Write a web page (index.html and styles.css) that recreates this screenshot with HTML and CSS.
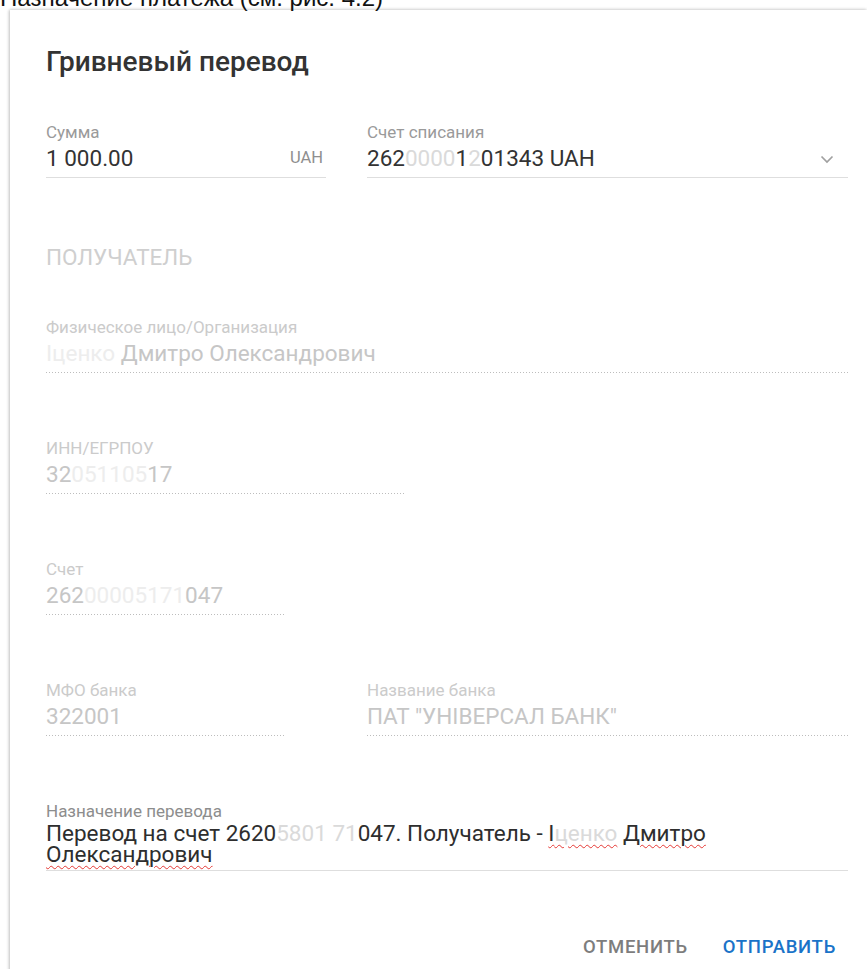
FILE: index.html
```html
<!DOCTYPE html>
<html lang="ru">
<head>
<meta charset="utf-8">
<title>Гривневый перевод</title>
<link rel="stylesheet" href="styles.css">
</head>
<body>
  <p class="doc-line">Назначение платежа (см. рис. 4.2)</p>

  <section class="dialog">
    <h1 class="dialog-title">Гривневый перевод</h1>

    <div class="row row-top">
      <div class="field">
        <div class="field-label">Сумма</div>
        <div class="field-value with-suffix">
          <span>1 000.00</span>
          <span class="suffix">UAH</span>
        </div>
      </div>
      <div class="field">
        <div class="field-label">Счет списания</div>
        <div class="field-value with-suffix">
          <span>262<span class="masked">0000</span>1<span class="masked">2</span>01343 UAH</span>
          <svg class="chevron" width="14" height="9" viewBox="0 0 14 9" aria-hidden="true">
            <path d="M1.5 1.5 L7 7 L12.5 1.5" fill="none" stroke="#a0a0a0" stroke-width="1.7"/>
          </svg>
        </div>
      </div>
    </div>

    <h2 class="section-title">ПОЛУЧАТЕЛЬ</h2>

    <div class="field disabled">
      <div class="field-label">Физическое лицо/Организация</div>
      <div class="field-value"><span class="masked-light">Іценко</span> Дмитро Олександрович</div>
    </div>

    <div class="field disabled w-inn">
      <div class="field-label">ИНН/ЕГРПОУ</div>
      <div class="field-value">32<span class="masked-light">051105</span>17</div>
    </div>

    <div class="field disabled w-short">
      <div class="field-label">Счет</div>
      <div class="field-value">262<span class="masked-light">00005171</span>047</div>
    </div>

    <div class="row row-bank">
      <div class="field disabled">
        <div class="field-label">МФО банка</div>
        <div class="field-value">322001</div>
      </div>
      <div class="field disabled">
        <div class="field-label">Название банка</div>
        <div class="field-value">ПАТ "УНІВЕРСАЛ БАНК"</div>
      </div>
    </div>

    <div class="field field-text">
      <div class="field-label">Назначение перевода</div>
      <div class="field-value">Перевод на счет 2620<span class="masked">5801 71</span>047. Получатель - <span class="spell">І<span class="masked">ценко</span></span> <span class="spell">Дмитро</span><br><span class="spell">Олександрович</span></div>
    </div>

    <div class="actions">
      <button class="btn btn-cancel" type="button">ОТМЕНИТЬ</button>
      <button class="btn btn-primary" type="button">ОТПРАВИТЬ</button>
    </div>
  </section>
</body>
</html>
```

FILE: styles.css
```css
html, body {
  margin: 0;
  padding: 0;
  background: #ffffff;
  overflow: hidden;
}

body {
  font-family: Roboto, "Noto Sans", sans-serif;
  color: #333333;
}

/* line of the surrounding document, mostly scrolled out of view */
.doc-line {
  margin: -14px 0 0 0;
  height: 24px;
  font-family: "Liberation Sans", Arial, sans-serif;
  font-size: 24px;
  line-height: 24px;
  color: #111111;
  white-space: nowrap;
}

.dialog {
  margin: 0 0 0 10px;
  padding: 36px 19px 40px 36px;
  background: #ffffff;
  box-shadow: -1px 0 3px rgba(0, 0, 0, 0.22), 0 -1px 3px rgba(0, 0, 0, 0.08);
}

.dialog-title {
  margin: 0;
  font-size: 28px;
  line-height: 32px;
  font-weight: 500;
  color: #333333;
}

.row {
  display: grid;
  grid-template-columns: 280px 1fr;
  column-gap: 41px;
}

.row-top {
  margin-top: 45px;
}

.row-bank {
  grid-template-columns: 239px 1fr;
  column-gap: 82px;
}

.field {
  padding-bottom: 6px;
  border-bottom: 1px solid #dedede;
}

.field-label {
  font-size: 17px;
  line-height: 19px;
  color: #9a9a9a;
}

.field-value {
  margin-top: 3px;
  font-size: 22.5px;
  line-height: 26px;
  color: #333333;
  white-space: nowrap;
}

.with-suffix {
  display: flex;
  align-items: center;
  justify-content: space-between;
}

.suffix {
  font-size: 16.5px;
  color: #8f8f8f;
  margin-right: 3px;
}

.chevron {
  margin-right: 14px;
  margin-top: 3px;
}

.masked {
  color: #dadada;
}

.section-title {
  margin: 66px 0 48px;
  font-size: 22.5px;
  line-height: 26px;
  font-weight: 400;
  color: #cfcfcf;
}

/* read-only fields with a dotted rule */
.field.disabled {
  border-bottom: 0;
  padding-bottom: 7px;
  background-image: linear-gradient(to right, #bdbdbd 1px, transparent 1px);
  background-size: 3px 1px;
  background-repeat: repeat-x;
  background-position: left bottom;
}

.field.disabled .field-label {
  color: #cbcbcb;
}

.field.disabled .field-value {
  color: #c6c6c6;
}

.masked-light {
  color: #ededed;
}

.dialog > .field + .field,
.dialog > .field + .row,
.dialog > .row + .field {
  margin-top: 66px;
}

.w-inn {
  width: 358px;
}

.w-short {
  width: 239px;
}

.field-text {
  padding-bottom: 5px;
}

.field-text .field-label {
  color: #8d8d8d;
}

.field-text .field-value {
  margin-top: 2px;
  line-height: 21px;
  white-space: normal;
  color: #2e2e2e;
}

.spell {
  text-decoration: underline wavy #e53935;
  text-decoration-thickness: 1px;
  text-underline-offset: 3px;
}

.actions {
  display: flex;
  justify-content: flex-end;
  gap: 35px;
  margin-top: 66px;
  padding-right: 12px;
}

.btn {
  padding: 0;
  border: 0;
  background: none;
  font-family: Roboto, "Noto Sans", sans-serif;
  font-size: 18.5px;
  line-height: 20px;
  font-weight: 500;
  letter-spacing: 0.7px;
  cursor: pointer;
}

.btn-cancel {
  color: #7d7d7d;
}

.btn-primary {
  color: #1a73c8;
}
```
